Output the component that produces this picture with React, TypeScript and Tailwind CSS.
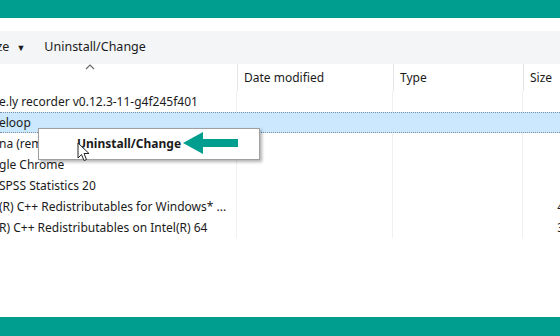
const rows = [
  { name: "e.ly recorder v0.12.3-11-g4f245f401", size: "", selected: false },
  { name: "eloop", size: "", selected: true },
  { name: "na (rem", size: "", selected: false },
  { name: "gle Chrome", size: "", selected: false },
  { name: "SPSS Statistics 20", size: "", selected: false },
  { name: "(R) C++ Redistributables for Windows* ...", size: "4", selected: false },
  { name: "R) C++ Redistributables on Intel(R) 64", size: "3", selected: false },
];

function Arrow() {
  return (
    <svg width="56" height="22" viewBox="0 0 56 22">
      <path d="M0 11 L20 0 L20 7 L55 7 L55 15 L20 15 L20 22 Z" fill="#009e8f" />
    </svg>
  );
}

function Cursor() {
  return (
    <svg width="14" height="20" viewBox="0 0 14 20">
      <path
        d="M1 1 L1 16 L4.5 12.5 L7 18.5 L9.5 17.5 L7 11.5 L12 11.5 Z"
        fill="#ffffff"
        stroke="#222222"
        strokeWidth="1"
        strokeLinejoin="round"
      />
    </svg>
  );
}

export default function App() {
  return (
    <div
      className="relative w-[560px] h-[336px] overflow-hidden bg-white text-[#1b1b1b] flex flex-col"
      style={{ fontFamily: '"Noto Sans", "Open Sans", sans-serif' }}
    >
      <div className="h-[18px] bg-[#009e8f] shrink-0" />
      <div className="h-[13px] bg-white shrink-0" />
      <div className="h-[33px] bg-[#f4f5f6] flex items-center text-[12.5px] shrink-0 overflow-hidden">
        <span className="ml-[-44px]">Organize</span>
        <span className="ml-[7px] text-[9px]">▼</span>
        <span className="ml-[19px]">Uninstall/Change</span>
      </div>
      <div className="flex-1 flex flex-col">
        <div className="relative h-[27px] flex text-[12px] shrink-0">
          <div className="w-[237px] relative">
            <svg className="absolute left-[85px] top-0" width="10" height="6" viewBox="0 0 10 6">
              <path d="M1 5 L5 1 L9 5" fill="none" stroke="#6b6b6b" strokeWidth="1.2" />
            </svg>
          </div>
          <div className="w-[156px] border-l border-[#e5e5e5] pl-[6px] flex items-center">Date modified</div>
          <div className="w-[130px] border-l border-[#e5e5e5] pl-[6px] flex items-center">Type</div>
          <div className="flex-1 border-l border-[#e5e5e5] pl-[6px] flex items-center">Size</div>
        </div>
        <div className="flex flex-col text-[12px]">
          {rows.map((r, i) => (
            <div
              key={i}
              className={
                r.selected
                  ? "h-[21px] flex items-center bg-[#cce8ff] border-y border-dotted border-[#7a8fa3]"
                  : "h-[21px] flex items-center"
              }
            >
              <div className="w-[237px] whitespace-nowrap overflow-hidden ml-[-1px]">{r.name}</div>
              <div className={r.selected ? "w-[156px] h-full" : "w-[156px] h-full border-l border-[#f0f0f0]"} />
              <div className={r.selected ? "w-[130px] h-full" : "w-[130px] h-full border-l border-[#f0f0f0]"} />
              <div className={r.selected ? "flex-1 h-full" : "flex-1 h-full border-l border-[#f0f0f0] flex items-center justify-end mr-[-4px]"}>
                {r.size}
              </div>
            </div>
          ))}
        </div>
      </div>
      <div className="h-[19px] bg-[#009e8f] shrink-0" />

      <div className="absolute left-[38px] top-[128px] w-[222px] h-[32px] bg-white border border-[#a0a0a0] shadow-[2px_2px_3px_rgba(0,0,0,0.3)] flex items-center">
        <span className="ml-[38px] text-[12px] font-bold text-[#1b1b1b]">Uninstall/Change</span>
      </div>
      <div className="absolute left-[183px] top-[132px]">
        <Arrow />
      </div>
      <div className="absolute left-[77px] top-[142px]">
        <Cursor />
      </div>
    </div>
  );
}
